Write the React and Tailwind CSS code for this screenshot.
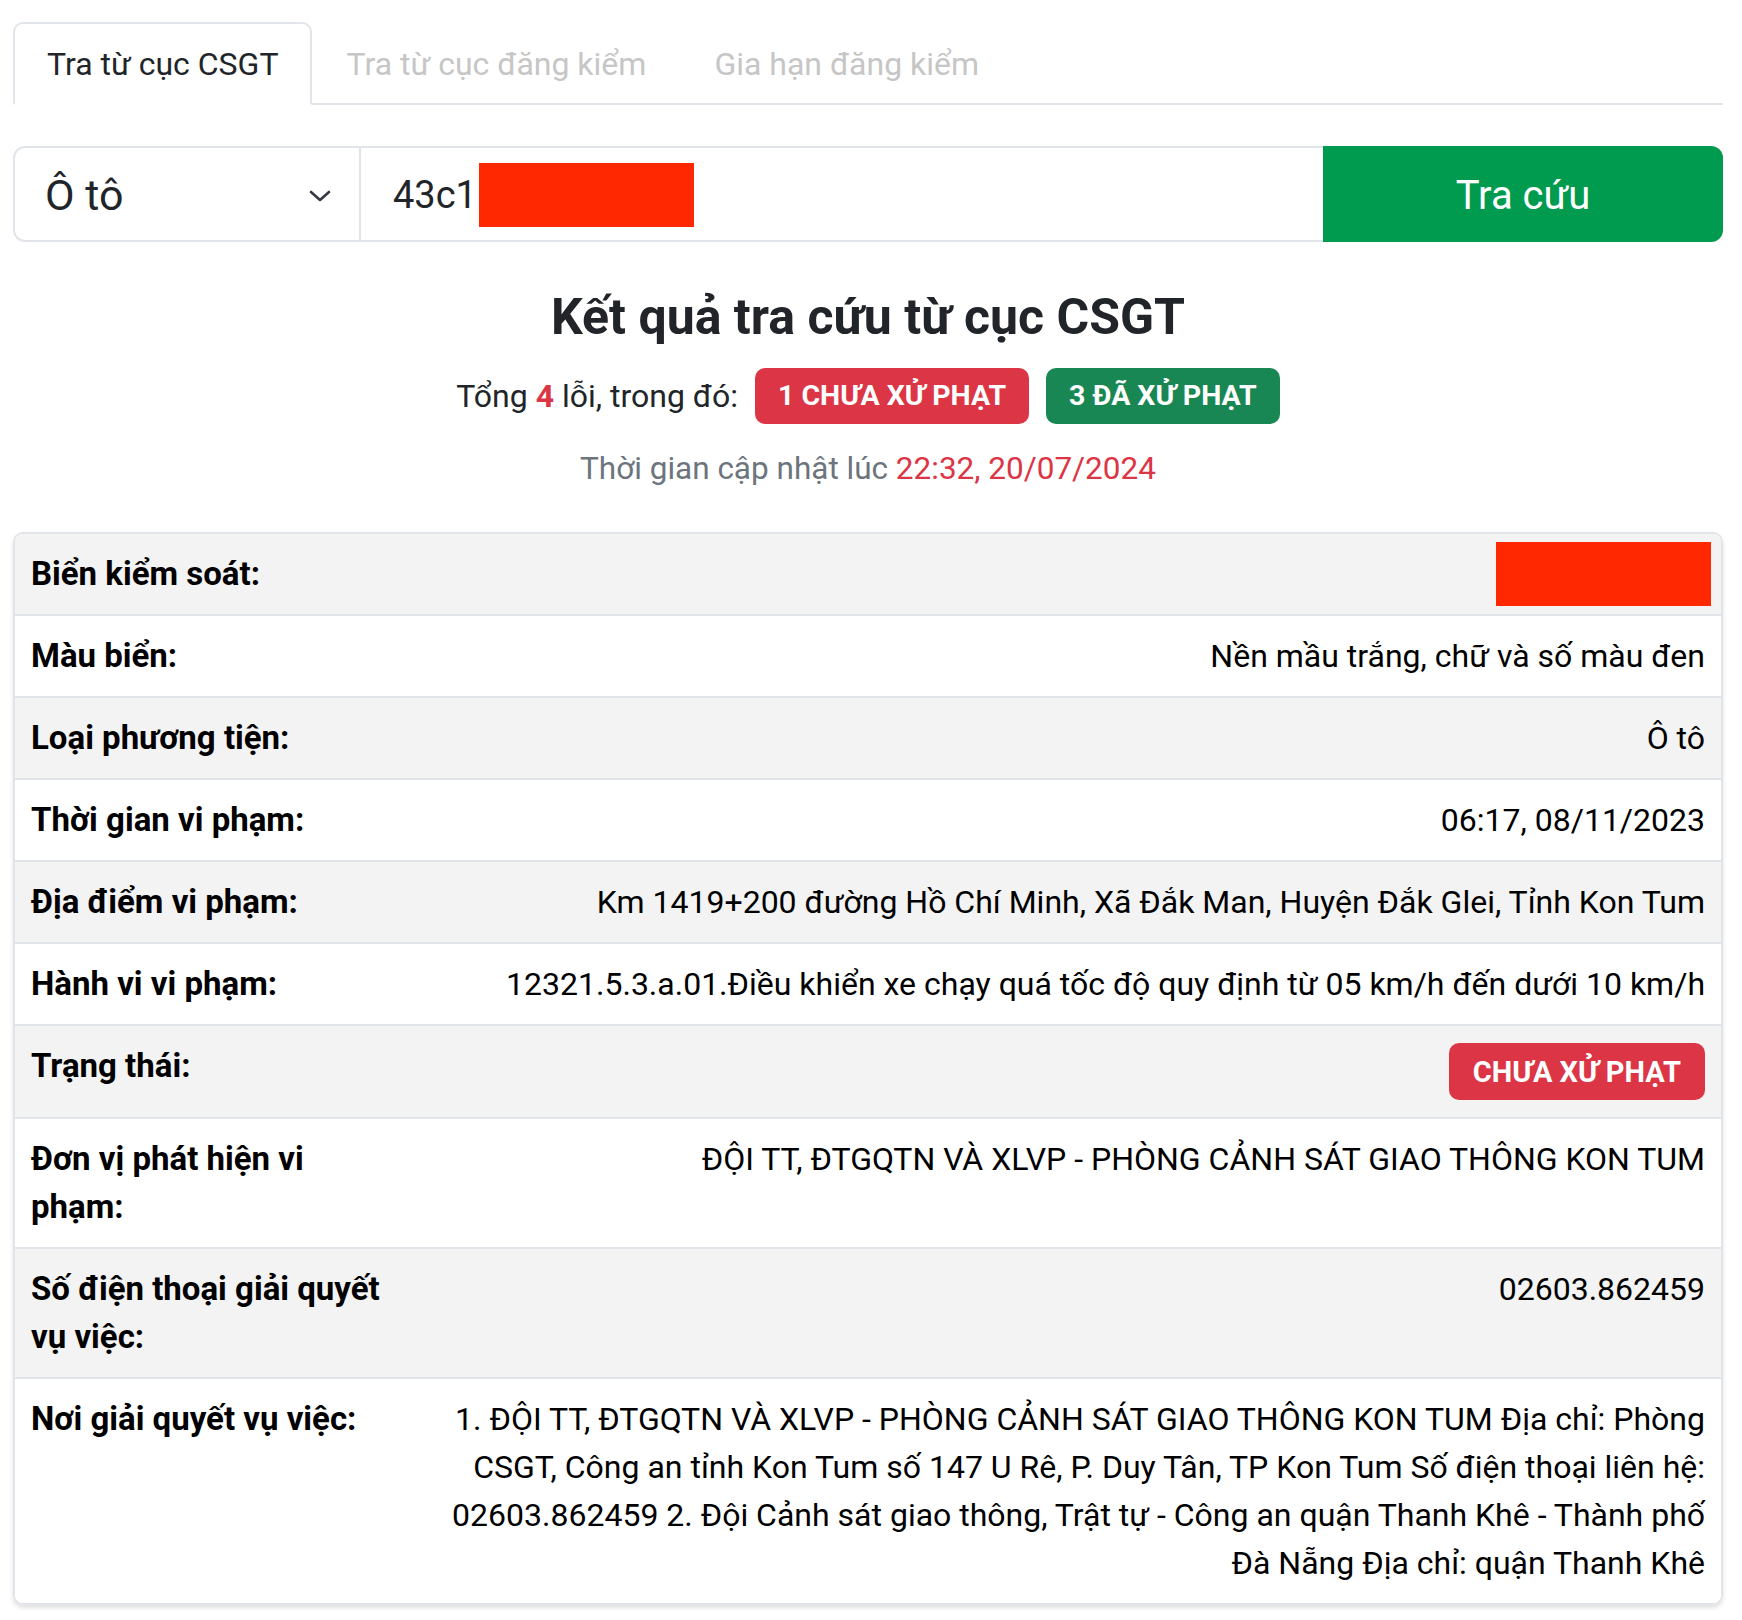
import { useState } from 'react'

const ROWS = [
  { label: 'Biển kiểm soát:', value: 'redacted' },
  { label: 'Màu biển:', value: 'Nền mầu trắng, chữ và số màu đen' },
  { label: 'Loại phương tiện:', value: 'Ô tô' },
  { label: 'Thời gian vi phạm:', value: '06:17, 08/11/2023' },
  { label: 'Địa điểm vi phạm:', value: 'Km 1419+200 đường Hồ Chí Minh, Xã Đắk Man, Huyện Đắk Glei, Tỉnh Kon Tum' },
  { label: 'Hành vi vi phạm:', value: '12321.5.3.a.01.Điều khiển xe chạy quá tốc độ quy định từ 05 km/h đến dưới 10 km/h' },
  { label: 'Trạng thái:', value: 'status' },
  { label: 'Đơn vị phát hiện vi phạm:', value: 'ĐỘI TT, ĐTGQTN VÀ XLVP - PHÒNG CẢNH SÁT GIAO THÔNG KON TUM' },
  { label: 'Số điện thoại giải quyết vụ việc:', value: '02603.862459' },
  {
    label: 'Nơi giải quyết vụ việc:',
    value: '1. ĐỘI TT, ĐTGQTN VÀ XLVP - PHÒNG CẢNH SÁT GIAO THÔNG KON TUM Địa chỉ: Phòng CSGT, Công an tỉnh Kon Tum số 147 U Rê, P. Duy Tân, TP Kon Tum Số điện thoại liên hệ: 02603.862459 2. Đội Cảnh sát giao thông, Trật tự - Công an quận Thanh Khê - Thành phố Đà Nẵng Địa chỉ: quận Thanh Khê',
  },
]

const TABS = ['Tra từ cục CSGT', 'Tra từ cục đăng kiểm', 'Gia hạn đăng kiểm']

export default function App() {
  const [activeTab, setActiveTab] = useState(0)

  return (
    <div className="min-h-screen bg-white pt-[22px] pl-[13px] pr-[19px] pb-10 font-['Roboto','Liberation_Sans',sans-serif] text-[#212529]">
      {/* TABS */}
      <div className="flex border-b-2 border-[#e1e4e8]">
        {TABS.map((tab, i) => (
          <button
            key={tab}
            onClick={() => setActiveTab(i)}
            className={`h-[83px] px-[32px] -mb-[2px] rounded-t-[10px] text-[32px] leading-none ${
              activeTab === i
                ? 'bg-white border-2 border-b-white border-[#e1e4e8] text-[#212529]'
                : 'border-2 border-transparent text-[#c6c6c6]'
            }`}
          >
            {tab}
          </button>
        ))}
      </div>

      {/* SEARCH */}
      <div className="mt-[41px] flex h-[96px] rounded-[12px] border-2 border-[#e1e4e8]">
        <div className="w-[346px] flex items-center justify-between pl-[30px] pr-[28px] pt-[3px] border-r-2 border-[#e1e4e8]">
          <span className="text-[43px]">Ô tô</span>
          <svg width="22" height="12" viewBox="0 0 22 12" fill="none">
            <polyline points="2,2 11,10 20,2" stroke="#343a40" strokeWidth="2.6" strokeLinecap="round" strokeLinejoin="round" />
          </svg>
        </div>
        <div className="flex-1 flex items-center pl-[32px] pt-[2px]">
          <span className="w-[86px] overflow-hidden whitespace-nowrap text-[38px]">43c1</span>
          <div className="w-[215px] h-[64px] bg-[#ff2800]" />
        </div>
        <button className="w-[400px] -my-[2px] -mr-[2px] pt-[3px] rounded-r-[12px] bg-[#009b4f] text-white text-[40px]">
          Tra cứu
        </button>
      </div>

      {/* RESULT HEADER */}
      <h1 className="mt-[46px] text-center text-[50px] leading-[58px] font-bold">Kết quả tra cứu từ cục CSGT</h1>
      <div className="mt-[22px] flex items-center justify-center gap-[17px] text-[32px]">
        <span>
          Tổng <span className="font-bold text-[#dc3545]">4</span> lỗi, trong đó:
        </span>
        <span className="h-[56px] px-[23px] flex items-center rounded-[10px] bg-[#dc3545] text-white text-[28.5px] font-bold">1 CHƯA XỬ PHẠT</span>
        <span className="h-[56px] px-[23px] flex items-center rounded-[10px] bg-[#198754] text-white text-[28.5px] font-bold">3 ĐÃ XỬ PHẠT</span>
      </div>
      <p className="mt-[22px] text-center text-[31.5px] leading-[45px] text-[#6c757d]">
        Thời gian cập nhật lúc <span className="text-[#dc3545]">22:32, 20/07/2024</span>
      </p>

      {/* RESULT TABLE */}
      <div className="mt-[41px] rounded-[10px] border-2 border-[#e1e4e8] overflow-hidden shadow-[0_3px_4px_rgba(0,0,0,0.12)]">
        {ROWS.map((row, i) => (
          <div
            key={row.label}
            className={`grid grid-cols-[365px_1fr] gap-x-[44px] px-[16px] py-[16px] text-[32px] leading-[48px] ${
              i % 2 === 0 ? 'bg-[#f3f3f3]' : 'bg-white'
            } ${i > 0 ? 'border-t-2 border-[#e1e4e8]' : ''}`}
          >
            <div className="font-bold text-[33px] text-black">{row.label}</div>
            <div className="text-right text-black">
              {row.value === 'redacted' ? (
                <div className="ml-auto w-[215px] h-[64px] -mr-[6px] -mt-[8px] -mb-[8px] bg-[#ff2800]" />
              ) : row.value === 'status' ? (
                <div className="flex justify-end pt-[1px] pb-[1px]">
                  <span className="flex h-[57px] items-center px-[24px] rounded-[10px] bg-[#dc3545] text-white text-[29px] font-bold">
                    CHƯA XỬ PHẠT
                  </span>
                </div>
              ) : (
                row.value
              )}
            </div>
          </div>
        ))}
      </div>
    </div>
  )
}
